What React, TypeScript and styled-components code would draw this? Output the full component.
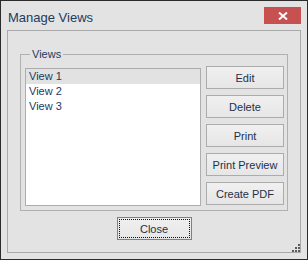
import React from "react";
import styled, { createGlobalStyle } from "styled-components";

const Global = createGlobalStyle`
  html, body { margin: 0; padding: 0; background: #e3e3e3; }
  * { box-sizing: border-box; }
`;

const Window = styled.div`
  width: 308px;
  height: 260px;
  border: 1px solid #2b2b2b;
  background: #e3e3e3;
  padding: 0 6px 6px 6px;
  display: flex;
  flex-direction: column;
  font-family: "Liberation Sans", Arial, sans-serif;
  font-size: 11px;
  color: #1f2f48;
`;

const TitleBar = styled.div`
  height: 29px;
  display: flex;
  align-items: flex-start;
  justify-content: space-between;
`;

const Title = styled.div`
  font-size: 13px;
  color: #243a5c;
  margin: 9px 0 0 1px;
  line-height: 15px;
`;

const CloseX = styled.div`
  width: 37px;
  height: 17px;
  margin-top: 6px;
  background: #c75050;
  display: flex;
  align-items: center;
  justify-content: center;
`;

const Panel = styled.div`
  flex: 1;
  border: 1px solid #a9a9a9;
  padding: 23px 12px 12px 12px;
  display: flex;
  flex-direction: column;
  align-items: center;
  position: relative;
`;

const GroupBox = styled.div`
  align-self: stretch;
  height: 157px;
  border: 1px solid #b0b0b0;
  padding: 11px 3px 4px 4px;
  display: flex;
  gap: 5px;
  align-items: flex-start;
  position: relative;
`;

const Legend = styled.span`
  position: absolute;
  left: 9px;
  top: -8px;
  padding: 0 2px;
  background: #e3e3e3;
  line-height: 14px;
  color: #243a5c;
`;

const ListBox = styled.div`
  margin-top: 2px;
  width: 176px;
  height: 138px;
  border: 1px solid #adadad;
  background: #ffffff;
  display: flex;
  flex-direction: column;
`;

const ListItem = styled.div<{ $selected?: boolean }>`
  height: 15px;
  line-height: 15px;
  padding-left: 3px;
  background: ${(p) => (p.$selected ? "#e2e2e2" : "transparent")};
  color: #243a5c;
`;

const ButtonColumn = styled.div`
  display: flex;
  flex-direction: column;
  gap: 6px;
`;

const Button = styled.div<{ $focused?: boolean }>`
  width: ${(p) => (p.$focused ? "75px" : "78px")};
  height: 23px;
  border: 1px solid ${(p) => (p.$focused ? "#3d8ee6" : "#acacac")};
  background: linear-gradient(#f0f0f0, #e6e6e6);
  display: flex;
  align-items: center;
  justify-content: center;
  color: #1f2f48;
  padding: 1px;
`;

const FocusRect = styled.div`
  flex: 1;
  align-self: stretch;
  border: 1px dotted #111;
  display: flex;
  align-items: center;
  justify-content: center;
`;

const CloseButton = styled(Button)`
  margin-top: 6px;
`;

const Grip = styled.svg`
  position: absolute;
  right: 0;
  bottom: 0;
`;

export default function App() {
  return (
    <>
      <Global />
      <Window>
        <TitleBar>
          <Title>Manage Views</Title>
          <CloseX>
            <svg width="10" height="8" viewBox="0 0 10 8">
              <path d="M1 0.5 L9 7.5 M9 0.5 L1 7.5" stroke="#fff" strokeWidth="2" />
            </svg>
          </CloseX>
        </TitleBar>
        <Panel>
          <GroupBox>
            <Legend>Views</Legend>
            <ListBox>
              <ListItem $selected>View 1</ListItem>
              <ListItem>View 2</ListItem>
              <ListItem>View 3</ListItem>
            </ListBox>
            <ButtonColumn>
              <Button>Edit</Button>
              <Button>Delete</Button>
              <Button>Print</Button>
              <Button>Print Preview</Button>
              <Button>Create PDF</Button>
            </ButtonColumn>
          </GroupBox>
          <CloseButton $focused>
            <FocusRect>Close</FocusRect>
          </CloseButton>
          <Grip width="8" height="8" viewBox="0 0 8 8">
            <g fill="#5a5a5a">
              <rect x="6" y="0" width="2" height="2" />
              <rect x="3" y="3" width="2" height="2" />
              <rect x="6" y="3" width="2" height="2" />
              <rect x="0" y="6" width="2" height="2" />
              <rect x="3" y="6" width="2" height="2" />
              <rect x="6" y="6" width="2" height="2" />
            </g>
          </Grip>
        </Panel>
      </Window>
    </>
  );
}
